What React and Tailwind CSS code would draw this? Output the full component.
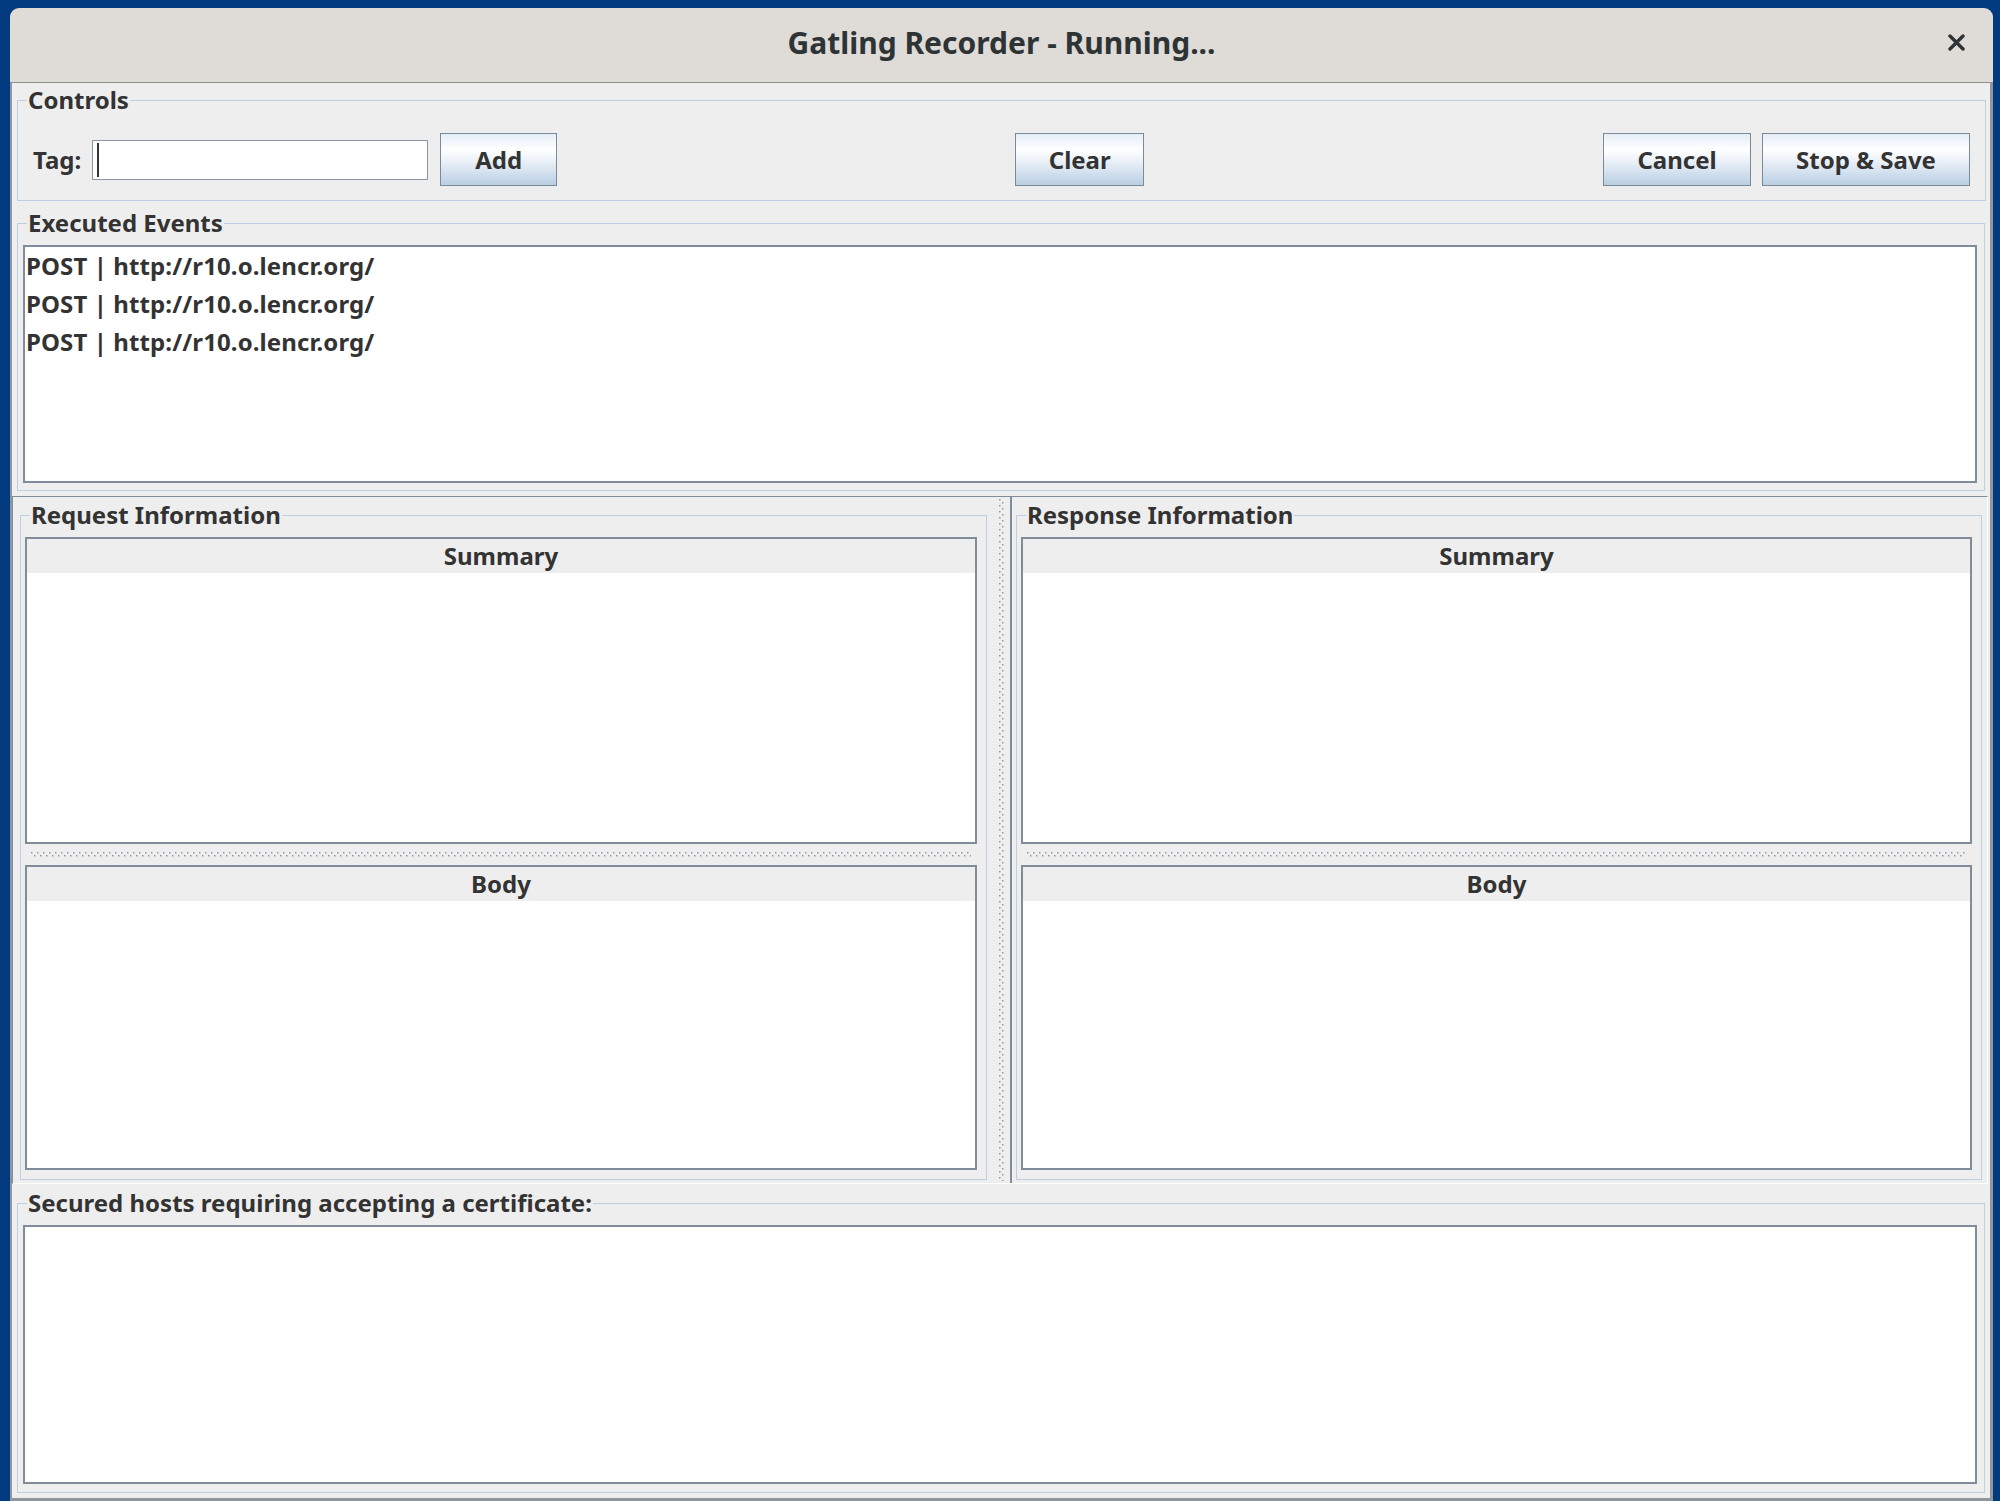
import React from 'react';

function Legend({ children }) {
  return (
    <legend className="ml-[9px] px-[1px] text-[24px] leading-[32px] font-bold text-[#333333]">
      {children}
    </legend>
  );
}

function Btn({ children, className = '' }) {
  return (
    <button
      className={`h-[53px] border border-[#7a8a99] bg-[linear-gradient(to_bottom,#e4edf6,#ffffff_30%,#eef3f9_50%,#b9cfe4)] text-[24px] font-bold text-[#333333] ${className}`}
    >
      {children}
    </button>
  );
}

function Dots() {
  return (
    <svg className="block w-full h-full">
      <defs>
        <pattern id="dots" width="6" height="6" patternUnits="userSpaceOnUse">
          <rect x="0" y="0" width="1.5" height="1.5" fill="#8d99a5" />
          <rect x="3" y="3" width="1.5" height="1.5" fill="#8d99a5" />
        </pattern>
      </defs>
      <rect width="100%" height="100%" fill="url(#dots)" />
    </svg>
  );
}

function InfoTable({ title, className = '' }) {
  return (
    <div className={`border-2 border-[#7f8c99] bg-white flex flex-col ${className}`}>
      <div className="h-[34px] bg-[#eeeeee] flex items-center justify-center text-[24px] font-bold text-[#333333]">
        {title}
      </div>
      <div className="flex-1" />
    </div>
  );
}

function InfoPanel({ title }) {
  return (
    <fieldset className="h-full border border-[#bccfe3] flex flex-col min-h-0">
      <Legend>{title}</Legend>
      <div className="flex-1 flex flex-col pt-[6px] pl-[4px] pr-[9px] pb-[9px]">
        <InfoTable title="Summary" className="h-[307px]" />
        <div className="h-[21px] flex items-center px-[6px]">
          <div className="w-full h-[5px]">
            <Dots />
          </div>
        </div>
        <InfoTable title="Body" className="flex-1" />
      </div>
    </fieldset>
  );
}

const events = [
  'POST | http://r10.o.lencr.org/',
  'POST | http://r10.o.lencr.org/',
  'POST | http://r10.o.lencr.org/',
];

export default function App() {
  return (
    <div className="w-[2000px] h-[1501px] bg-[#023a80] pt-[8px] pl-[10px] pr-[7px] overflow-hidden font-['Noto_Sans','Open_Sans',sans-serif]">
      <div className="h-full flex flex-col rounded-t-[9px] overflow-hidden">
        {/* title bar */}
        <div className="h-[75px] shrink-0 bg-[#dfdbd7] border-b border-[#8f8f8f] flex items-center justify-center pb-[5px] relative">
          <span className="text-[30px] font-bold text-[#2e3436]">Gatling Recorder - Running...</span>
          <svg className="absolute right-[28px] top-[26px]" width="17" height="17" viewBox="0 0 17 17">
            <path d="M2 2 L15 15 M15 2 L2 15" stroke="#2e3436" strokeWidth="3.4" strokeLinecap="round" />
          </svg>
        </div>

        {/* content */}
        <div className="flex-1 flex flex-col bg-[#eeeeee] border-l-2 border-r-[3px] border-b-[3px] border-[#8f969d] pt-[1px]">
          <fieldset className="ml-[5px] mr-[4px] border border-[#bccfe3]">
            <Legend>Controls</Legend>
            <div className="flex items-center pt-[17px] pb-[14px] pl-[15px] pr-[15px]">
              <span className="text-[24px] font-bold text-[#333333]">Tag:</span>
              <div className="ml-[11px] w-[336px] h-[40px] border border-[#8a96a2] bg-white flex items-center pl-[4px]">
                <div className="w-[2px] h-[34px] bg-[#333333]" />
              </div>
              <Btn className="ml-[12px] w-[117px]">Add</Btn>
              <Btn className="ml-[458px] w-[129px]">Clear</Btn>
              <Btn className="ml-auto w-[148px]">Cancel</Btn>
              <Btn className="ml-[11px] w-[208px]">Stop &amp; Save</Btn>
            </div>
          </fieldset>

          <fieldset className="mt-[6px] ml-[5px] mr-[5px] border border-[#bccfe3]">
            <Legend>Executed Events</Legend>
            <div className="pt-[6px] pl-[5px] pr-[7px] pb-[7px]">
              <div className="h-[238px] border-2 border-[#7f8c99] bg-white pl-[1px]">
                {events.map((e, i) => (
                  <div key={i} className="leading-[38px] text-[24px] tracking-[0.1px] font-bold text-[#333333]">
                    {e}
                  </div>
                ))}
              </div>
            </div>
          </fieldset>

          {/* split pane */}
          <div className="mt-[5px] mr-[2px] h-[688px] shrink-0 flex border-t border-l border-[#7f8c99] border-b border-r border-b-white border-r-white">
            <div className="w-[980px] pt-[2px] pl-[7px] pr-[6px] pb-[3px]">
              <InfoPanel title="Request Information" />
            </div>
            <div className="w-[17px] flex justify-center py-[2px]">
              <div className="w-[5px] h-full">
                <Dots />
              </div>
            </div>
            <div className="flex-1 border-l-2 border-[#7f8c99] pt-[2px] pl-[4px] pr-[5px] pb-[3px]">
              <InfoPanel title="Response Information" />
            </div>
          </div>

          <fieldset className="mt-[3px] ml-[5px] mr-[5px] border border-[#bccfe3]">
            <Legend>Secured hosts requiring accepting a certificate:</Legend>
            <div className="pt-[6px] pl-[5px] pr-[7px] pb-[8px]">
              <div className="h-[259px] border-2 border-[#7f8c99] bg-white" />
            </div>
          </fieldset>
        </div>
      </div>
    </div>
  );
}
